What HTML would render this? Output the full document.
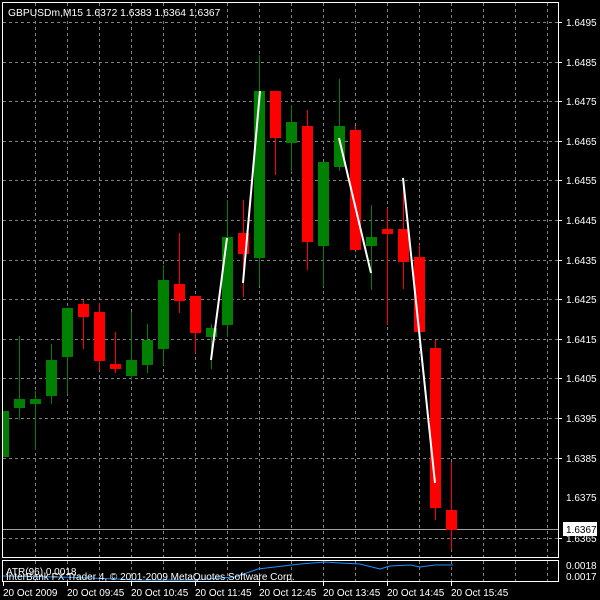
<!DOCTYPE html>
<html><head><style>
html,body{margin:0;padding:0;background:#000;}
svg{display:block}
text{font-family:"Liberation Sans",sans-serif;font-size:10px;fill:#fff}
</style></head><body>
<svg width="600" height="600" xmlns="http://www.w3.org/2000/svg" shape-rendering="crispEdges">
<rect width="600" height="600" fill="#000"/>
<g stroke="#808080" stroke-dasharray="3,3" stroke-width="1">
<line x1="3" x2="558" y1="22.5" y2="22.5"/><line x1="3" x2="558" y1="62.5" y2="62.5"/><line x1="3" x2="558" y1="101.5" y2="101.5"/><line x1="3" x2="558" y1="141.5" y2="141.5"/><line x1="3" x2="558" y1="180.5" y2="180.5"/><line x1="3" x2="558" y1="220.5" y2="220.5"/><line x1="3" x2="558" y1="260.5" y2="260.5"/><line x1="3" x2="558" y1="299.5" y2="299.5"/><line x1="3" x2="558" y1="339.5" y2="339.5"/><line x1="3" x2="558" y1="378.5" y2="378.5"/><line x1="3" x2="558" y1="418.5" y2="418.5"/><line x1="3" x2="558" y1="458.5" y2="458.5"/><line x1="3" x2="558" y1="538.5" y2="538.5"/>
<line y1="3" y2="557" x1="35.5" x2="35.5"/><line y1="3" y2="557" x1="67.5" x2="67.5"/><line y1="3" y2="557" x1="99.5" x2="99.5"/><line y1="3" y2="557" x1="131.5" x2="131.5"/><line y1="3" y2="557" x1="163.5" x2="163.5"/><line y1="3" y2="557" x1="195.5" x2="195.5"/><line y1="3" y2="557" x1="227.5" x2="227.5"/><line y1="3" y2="557" x1="259.5" x2="259.5"/><line y1="3" y2="557" x1="291.5" x2="291.5"/><line y1="3" y2="557" x1="323.5" x2="323.5"/><line y1="3" y2="557" x1="355.5" x2="355.5"/><line y1="3" y2="557" x1="387.5" x2="387.5"/><line y1="3" y2="557" x1="419.5" x2="419.5"/><line y1="3" y2="557" x1="451.5" x2="451.5"/><line y1="3" y2="557" x1="483.5" x2="483.5"/><line y1="3" y2="557" x1="515.5" x2="515.5"/><line y1="3" y2="557" x1="547.5" x2="547.5"/>
<line y1="561" y2="581" x1="35.5" x2="35.5"/><line y1="561" y2="581" x1="67.5" x2="67.5"/><line y1="561" y2="581" x1="99.5" x2="99.5"/><line y1="561" y2="581" x1="131.5" x2="131.5"/><line y1="561" y2="581" x1="163.5" x2="163.5"/><line y1="561" y2="581" x1="195.5" x2="195.5"/><line y1="561" y2="581" x1="227.5" x2="227.5"/><line y1="561" y2="581" x1="259.5" x2="259.5"/><line y1="561" y2="581" x1="291.5" x2="291.5"/><line y1="561" y2="581" x1="323.5" x2="323.5"/><line y1="561" y2="581" x1="355.5" x2="355.5"/><line y1="561" y2="581" x1="387.5" x2="387.5"/><line y1="561" y2="581" x1="419.5" x2="419.5"/><line y1="561" y2="581" x1="451.5" x2="451.5"/><line y1="561" y2="581" x1="483.5" x2="483.5"/><line y1="561" y2="581" x1="515.5" x2="515.5"/><line y1="561" y2="581" x1="547.5" x2="547.5"/>
</g>
<line x1="3" x2="558" y1="529.5" y2="529.5" stroke="#a0a0a0"/>
<g stroke-width="1">
<g stroke="#008000">
<line x1="19.5" x2="19.5" y1="336" y2="420"/><line x1="35.5" x2="35.5" y1="391" y2="450"/><line x1="51.5" x2="51.5" y1="344" y2="404"/><line x1="67.5" x2="67.5" y1="308" y2="394"/><line x1="131.5" x2="131.5" y1="312" y2="380"/><line x1="147.5" x2="147.5" y1="324" y2="373"/><line x1="163.5" x2="163.5" y1="265" y2="365"/><line x1="211.5" x2="211.5" y1="324" y2="369"/><line x1="227.5" x2="227.5" y1="200" y2="337"/><line x1="259.5" x2="259.5" y1="55" y2="286"/><line x1="291.5" x2="291.5" y1="105" y2="172"/><line x1="323.5" x2="323.5" y1="162" y2="287"/><line x1="339.5" x2="339.5" y1="79" y2="171"/><line x1="371.5" x2="371.5" y1="205" y2="290"/>
</g>
<g stroke="#ff0000">
<line x1="83.5" x2="83.5" y1="300" y2="349"/><line x1="99.5" x2="99.5" y1="303" y2="370"/><line x1="115.5" x2="115.5" y1="332" y2="373"/><line x1="179.5" x2="179.5" y1="233" y2="313"/><line x1="195.5" x2="195.5" y1="296" y2="353"/><line x1="243.5" x2="243.5" y1="200" y2="297"/><line x1="275.5" x2="275.5" y1="95" y2="175"/><line x1="307.5" x2="307.5" y1="110" y2="270"/><line x1="355.5" x2="355.5" y1="126" y2="250"/><line x1="387.5" x2="387.5" y1="208" y2="325"/><line x1="403.5" x2="403.5" y1="178" y2="289"/><line x1="419.5" x2="419.5" y1="245" y2="340"/><line x1="435.5" x2="435.5" y1="340" y2="520"/><line x1="451.5" x2="451.5" y1="462" y2="550"/>
</g></g>
<g fill="#008000">
<rect x="2" y="411" width="7" height="46"/><rect x="14" y="399" width="11" height="9"/><rect x="30" y="399" width="11" height="5"/><rect x="46" y="360" width="11" height="36"/><rect x="62" y="308" width="11" height="49"/><rect x="126" y="360" width="11" height="16"/><rect x="142" y="340" width="11" height="25"/><rect x="158" y="280" width="11" height="69"/><rect x="206" y="328" width="11" height="9"/><rect x="222" y="237" width="11" height="88"/><rect x="254" y="91" width="11" height="167"/><rect x="286" y="122" width="11" height="21"/><rect x="318" y="162" width="11" height="84"/><rect x="334" y="126" width="11" height="41"/><rect x="366" y="237" width="11" height="9"/>
</g>
<g fill="#ff0000">
<rect x="78" y="304" width="11" height="13"/><rect x="94" y="312" width="11" height="49"/><rect x="110" y="364" width="11" height="5"/><rect x="174" y="284" width="11" height="17"/><rect x="190" y="296" width="11" height="37"/><rect x="238" y="233" width="11" height="21"/><rect x="270" y="91" width="11" height="47"/><rect x="302" y="126" width="11" height="116"/><rect x="350" y="130" width="11" height="120"/><rect x="382" y="229" width="11" height="5"/><rect x="398" y="229" width="11" height="33"/><rect x="414" y="257" width="11" height="75"/><rect x="430" y="348" width="11" height="160"/><rect x="446" y="510" width="11" height="20"/>
</g>
<g stroke="#fff" stroke-width="2" shape-rendering="auto">
<line x1="211" y1="360" x2="227" y2="238"/><line x1="243" y1="283" x2="260" y2="91"/><line x1="339" y1="138" x2="371" y2="273"/><line x1="403" y1="178" x2="435" y2="483"/>
</g>
<g fill="none" stroke="#fff">
<rect x="2.5" y="2.5" width="556" height="555"/><rect x="2.5" y="560.5" width="556" height="21"/>
</g>
<polyline fill="none" stroke="#1e90ff" stroke-width="1" shape-rendering="auto" points="3,576 60,577 90,578 140,580 195,580 220,578 235,577 258,569 300,564 325,562 340,563 360,564 372,567 380,569 390,566 410,565 420,567 435,565 453,565"/>
<text x="8" y="16" style="font-size:10.3px">GBPUSDm,M15  1.6372 1.6383 1.6364 1.6367</text>
<text x="6" y="575">ATR(96) 0.0018</text>
<text x="6" y="580">InterBank FX Trader 4, © 2001-2009 MetaQuotes Software Corp.</text>
<g stroke="#fff"><line x1="558" x2="562" y1="22.5" y2="22.5"/><line x1="558" x2="562" y1="62.5" y2="62.5"/><line x1="558" x2="562" y1="101.5" y2="101.5"/><line x1="558" x2="562" y1="141.5" y2="141.5"/><line x1="558" x2="562" y1="180.5" y2="180.5"/><line x1="558" x2="562" y1="220.5" y2="220.5"/><line x1="558" x2="562" y1="260.5" y2="260.5"/><line x1="558" x2="562" y1="299.5" y2="299.5"/><line x1="558" x2="562" y1="339.5" y2="339.5"/><line x1="558" x2="562" y1="378.5" y2="378.5"/><line x1="558" x2="562" y1="418.5" y2="418.5"/><line x1="558" x2="562" y1="458.5" y2="458.5"/><line x1="558" x2="562" y1="538.5" y2="538.5"/></g>
<g>
<text x="566" y="26">1.6495</text><text x="566" y="66">1.6485</text><text x="566" y="105">1.6475</text><text x="566" y="145">1.6465</text><text x="566" y="184">1.6455</text><text x="566" y="224">1.6445</text><text x="566" y="264">1.6435</text><text x="566" y="303">1.6425</text><text x="566" y="343">1.6415</text><text x="566" y="382">1.6405</text><text x="566" y="422">1.6395</text><text x="566" y="462">1.6385</text><text x="566" y="501">1.6375</text><text x="566" y="542">1.6365</text>
<text x="566" y="569">0.0018</text><text x="566" y="580">0.0017</text>
</g>
<rect x="563" y="522" width="34" height="14" fill="#fff"/>
<text x="566" y="533" style="fill:#000">1.6367</text>
<g stroke="#fff"><line x1="3.5" x2="3.5" y1="582" y2="586"/><line x1="67.5" x2="67.5" y1="582" y2="586"/><line x1="131.5" x2="131.5" y1="582" y2="586"/><line x1="195.5" x2="195.5" y1="582" y2="586"/><line x1="259.5" x2="259.5" y1="582" y2="586"/><line x1="323.5" x2="323.5" y1="582" y2="586"/><line x1="387.5" x2="387.5" y1="582" y2="586"/><line x1="451.5" x2="451.5" y1="582" y2="586"/></g>
<text x="3" y="596">20 Oct 2009</text><text x="67" y="596">20 Oct 09:45</text><text x="131" y="596">20 Oct 10:45</text><text x="195" y="596">20 Oct 11:45</text><text x="259" y="596">20 Oct 12:45</text><text x="323" y="596">20 Oct 13:45</text><text x="387" y="596">20 Oct 14:45</text><text x="451" y="596">20 Oct 15:45</text>
</svg>
</body></html>
